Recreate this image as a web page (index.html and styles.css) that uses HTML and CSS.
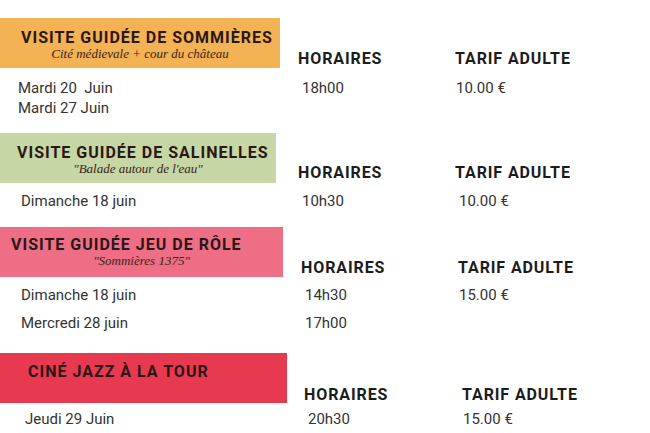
FILE: index.html
```html
<!DOCTYPE html>
<html lang="fr">
<head>
<meta charset="utf-8">
<title>Visites guidées</title>
<link rel="stylesheet" href="styles.css">
</head>
<body>
<main class="page">
  <section class="event ev1">
    <div class="left">
      <div class="bar orange">
        <h2 class="title">VISITE GUIDÉE DE SOMMIÈRES</h2>
        <p class="sub">Cité médievale + cour du château</p>
      </div>
      <ul class="vals">
        <li>Mardi 20&nbsp; Juin</li>
        <li>Mardi 27 Juin</li>
      </ul>
    </div>
    <div class="col hor">
      <h3 class="head">HORAIRES</h3>
      <ul class="vals"><li>18h00</li></ul>
    </div>
    <div class="col tarif">
      <h3 class="head">TARIF ADULTE</h3>
      <ul class="vals"><li>10.00 €</li></ul>
    </div>
  </section>

  <section class="event ev2">
    <div class="left">
      <div class="bar green">
        <h2 class="title">VISITE GUIDÉE DE SALINELLES</h2>
        <p class="sub">"Balade autour de l'eau"</p>
      </div>
      <ul class="vals"><li>Dimanche 18 juin</li></ul>
    </div>
    <div class="col hor">
      <h3 class="head">HORAIRES</h3>
      <ul class="vals"><li>10h30</li></ul>
    </div>
    <div class="col tarif">
      <h3 class="head">TARIF ADULTE</h3>
      <ul class="vals"><li>10.00 €</li></ul>
    </div>
  </section>

  <section class="event ev3">
    <div class="left">
      <div class="bar pink">
        <h2 class="title">VISITE GUIDÉE JEU DE RÔLE</h2>
        <p class="sub">"Sommières 1375"</p>
      </div>
      <ul class="vals tall"><li>Dimanche 18 juin</li><li>Mercredi 28 juin</li></ul>
    </div>
    <div class="col hor">
      <h3 class="head">HORAIRES</h3>
      <ul class="vals tall"><li>14h30</li><li>17h00</li></ul>
    </div>
    <div class="col tarif">
      <h3 class="head">TARIF ADULTE</h3>
      <ul class="vals"><li>15.00 €</li></ul>
    </div>
  </section>

  <section class="event ev4">
    <div class="left">
      <div class="bar red">
        <h2 class="title">CINÉ JAZZ À LA TOUR</h2>
      </div>
      <ul class="vals"><li>Jeudi 29 Juin</li></ul>
    </div>
    <div class="col hor">
      <h3 class="head">HORAIRES</h3>
      <ul class="vals"><li>20h30</li></ul>
    </div>
    <div class="col tarif">
      <h3 class="head">TARIF ADULTE</h3>
      <ul class="vals"><li>15.00 €</li></ul>
    </div>
  </section>
</main>
</body>
</html>
```

FILE: styles.css
```css
* { box-sizing: border-box; }
html, body { margin: 0; padding: 0; background: #fff; }
body {
  font-family: Roboto, "Liberation Sans", sans-serif;
  color: #333;
  width: 650px;
  height: 433px;
  overflow: hidden;
}
.page { padding-top: 18px; display: flex; flex-direction: column; }
.event { display: flex; align-items: flex-start; }
.ev2 { margin-top: 15px; }
.ev3 { margin-top: 16px; }
.ev4 { margin-top: 16px; }

.left { width: 298px; flex: none; }
.ev3 .left { width: 301px; }
.ev4 .left { width: 304px; }

.bar {
  height: 50px;
  padding-top: 11px;
  display: flex;
  flex-direction: column;
}
.ev3 .bar { padding-top: 9px; }
.ev4 .bar { padding-top: 10px; }
.orange { background: #f3b253; width: 280px; }
.green { background: #c6d6a5; width: 276px; }
.pink { background: #ee6e86; width: 283px; }
.red { background: #e73a51; width: 287px; }

.title {
  margin: 0;
  font-size: 16px;
  line-height: 18px;
  font-weight: 700;
  letter-spacing: 1px;
  color: #2a1716;
  white-space: nowrap;
}
.ev1 .title { padding-left: 21px; }
.ev2 .title { padding-left: 17px; }
.ev3 .title { padding-left: 11px; }
.ev4 .title { padding-left: 28px; }

.sub {
  margin: 0;
  font-family: "Liberation Serif", "DejaVu Serif", serif;
  font-style: italic;
  font-size: 13px;
  line-height: 13px;
  color: #3a2418;
  text-align: center;
  white-space: nowrap;
}

.vals {
  list-style: none;
  margin: 0;
  padding: 0;
  font-size: 15px;
  line-height: 20px;
}
.vals.tall { line-height: 28px; }

.left .vals { padding-left: 18px; }
.ev1 .left .vals { margin-top: 10px; }
.ev2 .left .vals { margin-top: 8px; padding-left: 21px; }
.ev3 .left .vals { margin-top: 4px; padding-left: 21px; }
.ev4 .left .vals { margin-top: 6px; padding-left: 25px; }

.col { flex: none; }
.ev1 .col { padding-top: 31px; }
.ev2 .col { padding-top: 30px; }
.ev3 .col { padding-top: 31px; }
.ev4 .col { padding-top: 32px; }
.hor { width: 157px; }
.ev4 .hor { width: 158px; }
.head {
  margin: 0;
  font-size: 16px;
  line-height: 20px;
  font-weight: 700;
  letter-spacing: 0.9px;
  color: #1c1c1c;
  white-space: nowrap;
}
.ev1 .col .vals { margin-top: 9px; }
.ev2 .col .vals { margin-top: 8px; }
.ev3 .col .vals { margin-top: 7px; }
.ev3 .col .vals.tall { margin-top: 3px; }
.ev4 .col .vals { margin-top: 4px; }
.hor .vals { padding-left: 4px; }
.tarif .vals { padding-left: 1px; }
.ev2 .tarif .vals { padding-left: 4px; }
```
